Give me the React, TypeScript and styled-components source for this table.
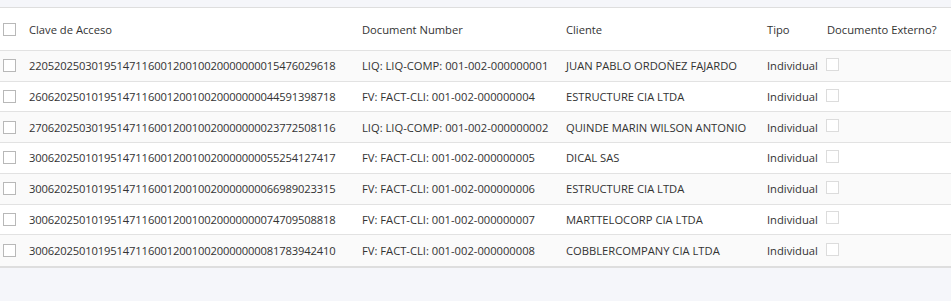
import styled, { createGlobalStyle } from "styled-components";

const GlobalStyle = createGlobalStyle`
    body {
        margin: 0;
        background: #f5f6fa;
        font-family: "Open Sans", "Noto Sans", sans-serif;
        color: #333;
    }
`

const Page = styled.div`
    padding-top: 7px;
    height: 294px;
`

const Grid = styled.div`
    background: white;
    border-top: 1px solid #dedede;
    border-bottom: 2px solid #dedede;
`

const cols = "21px 333px 204px 201px 60px 1fr";

const HeaderRow = styled.div`
    display: grid;
    grid-template-columns: ${cols};
    align-items: center;
    height: 42px;
    border-bottom: 1px solid #e2e2e2;
`

const Row = styled.div<{ $odd: boolean }>`
    display: grid;
    grid-template-columns: ${cols};
    align-items: center;
    height: 29.71px;
    background: ${props => props.$odd ? "#fafafa" : "white"};
    border-bottom: 1px solid #e2e2e2;
    &:last-child {
        border-bottom: none;
        height: 30.71px;
    }
`

const Cell = styled.div<{ $tight?: boolean }>`
    padding: 0 8px;
    font-size: 11.2px;
    white-space: nowrap;
    overflow: hidden;
    letter-spacing: ${props => props.$tight ? "-0.14px" : "normal"};
`

const CheckCell = styled.div`
    padding-left: 3px;
    display: flex;
    align-items: center;
`

const Box = styled.span<{ $disabled?: boolean }>`
    display: inline-block;
    width: 11px;
    height: 11px;
    border: 1px solid ${props => props.$disabled ? "#dcdcdc" : "#b8b8b8"};
    background: white;
    margin-left: ${props => props.$disabled ? "-1px" : "0"};
`

interface Doc {
    clave: string;
    number: string;
    cliente: string;
    tipo: string;
}

const docs: Doc[] = [
    { clave: "2205202503019514711600120010020000000015476029618", number: "LIQ: LIQ-COMP: 001-002-000000001", cliente: "JUAN PABLO ORDOÑEZ FAJARDO", tipo: "Individual" },
    { clave: "2606202501019514711600120010020000000044591398718", number: "FV: FACT-CLI: 001-002-000000004", cliente: "ESTRUCTURE CIA LTDA", tipo: "Individual" },
    { clave: "2706202503019514711600120010020000000023772508116", number: "LIQ: LIQ-COMP: 001-002-000000002", cliente: "QUINDE MARIN WILSON ANTONIO", tipo: "Individual" },
    { clave: "3006202501019514711600120010020000000055254127417", number: "FV: FACT-CLI: 001-002-000000005", cliente: "DICAL SAS", tipo: "Individual" },
    { clave: "3006202501019514711600120010020000000066989023315", number: "FV: FACT-CLI: 001-002-000000006", cliente: "ESTRUCTURE CIA LTDA", tipo: "Individual" },
    { clave: "3006202501019514711600120010020000000074709508818", number: "FV: FACT-CLI: 001-002-000000007", cliente: "MARTTELOCORP CIA LTDA", tipo: "Individual" },
    { clave: "3006202501019514711600120010020000000081783942410", number: "FV: FACT-CLI: 001-002-000000008", cliente: "COBBLERCOMPANY CIA LTDA", tipo: "Individual" },
];

function App() {
    return (
        <Page>
            <GlobalStyle />
            <Grid>
                <HeaderRow>
                    <CheckCell><Box /></CheckCell>
                    <Cell>Clave de Acceso</Cell>
                    <Cell>Document Number</Cell>
                    <Cell>Cliente</Cell>
                    <Cell>Tipo</Cell>
                    <Cell>Documento Externo?</Cell>
                </HeaderRow>
                {docs.map((doc, i) => (
                    <Row key={doc.clave} $odd={i % 2 === 0}>
                        <CheckCell><Box /></CheckCell>
                        <Cell $tight>{doc.clave}</Cell>
                        <Cell>{doc.number}</Cell>
                        <Cell>{doc.cliente}</Cell>
                        <Cell>{doc.tipo}</Cell>
                        <Cell><Box $disabled /></Cell>
                    </Row>
                ))}
            </Grid>
        </Page>
    )
}

export default App;
